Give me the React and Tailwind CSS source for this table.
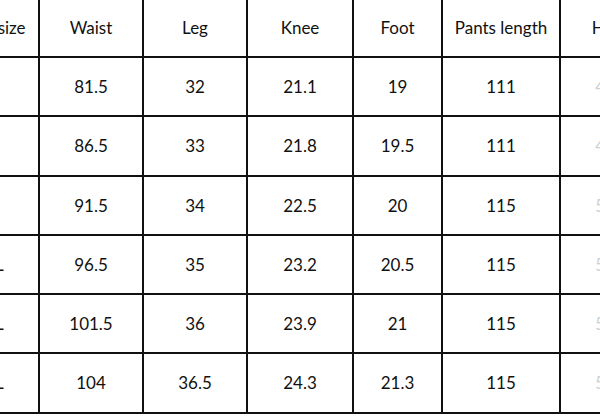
const header = ["Asian size", "Waist", "Leg", "Knee", "Foot", "Pants length", "Hip"];
const rows = [
  ["M", "81.5", "32", "21.1", "19", "111", "47"],
  ["L", "86.5", "33", "21.8", "19.5", "111", "49"],
  ["XL", "91.5", "34", "22.5", "20", "115", "51"],
  ["2XL", "96.5", "35", "23.2", "20.5", "115", "53"],
  ["3XL", "101.5", "36", "23.9", "21", "115", "55"],
  ["4XL", "104", "36.5", "24.3", "21.3", "115", "57"],
];
const widths = ["w-[100px]", "w-[104px]", "w-[104px]", "w-[106px]", "w-[89px]", "w-[118px]", "w-[88px]"];
const heights = ["h-[56px]", "h-[57px]", "h-[58px]", "h-[57px]", "h-[57px]", "h-[57px]", "h-[58px]"];

function Row({ cells, h, head }) {
  return (
    <div className="flex border-b-2 border-[#111]">
      {cells.map((c, i) => (
        <div
          key={i}
          className={`${widths[i]} ${h} shrink-0 flex items-center justify-center whitespace-nowrap ${i < 6 ? "border-r-2 border-[#111]" : ""} ${i === 6 && !head ? "text-[#d0d0d0]" : ""}`}
        >
          {c}
        </div>
      ))}
    </div>
  );
}

export default function App() {
  return (
    <div className="w-[600px] h-[416px] overflow-hidden bg-white text-[17px] text-[#111] font-['Lato',sans-serif]">
      <div className="ml-[-60px] w-[800px]">
        <Row cells={header} h={heights[0]} head />
        {rows.map((r, i) => (
          <Row key={i} cells={r} h={heights[i + 1]} />
        ))}
      </div>
    </div>
  );
}
